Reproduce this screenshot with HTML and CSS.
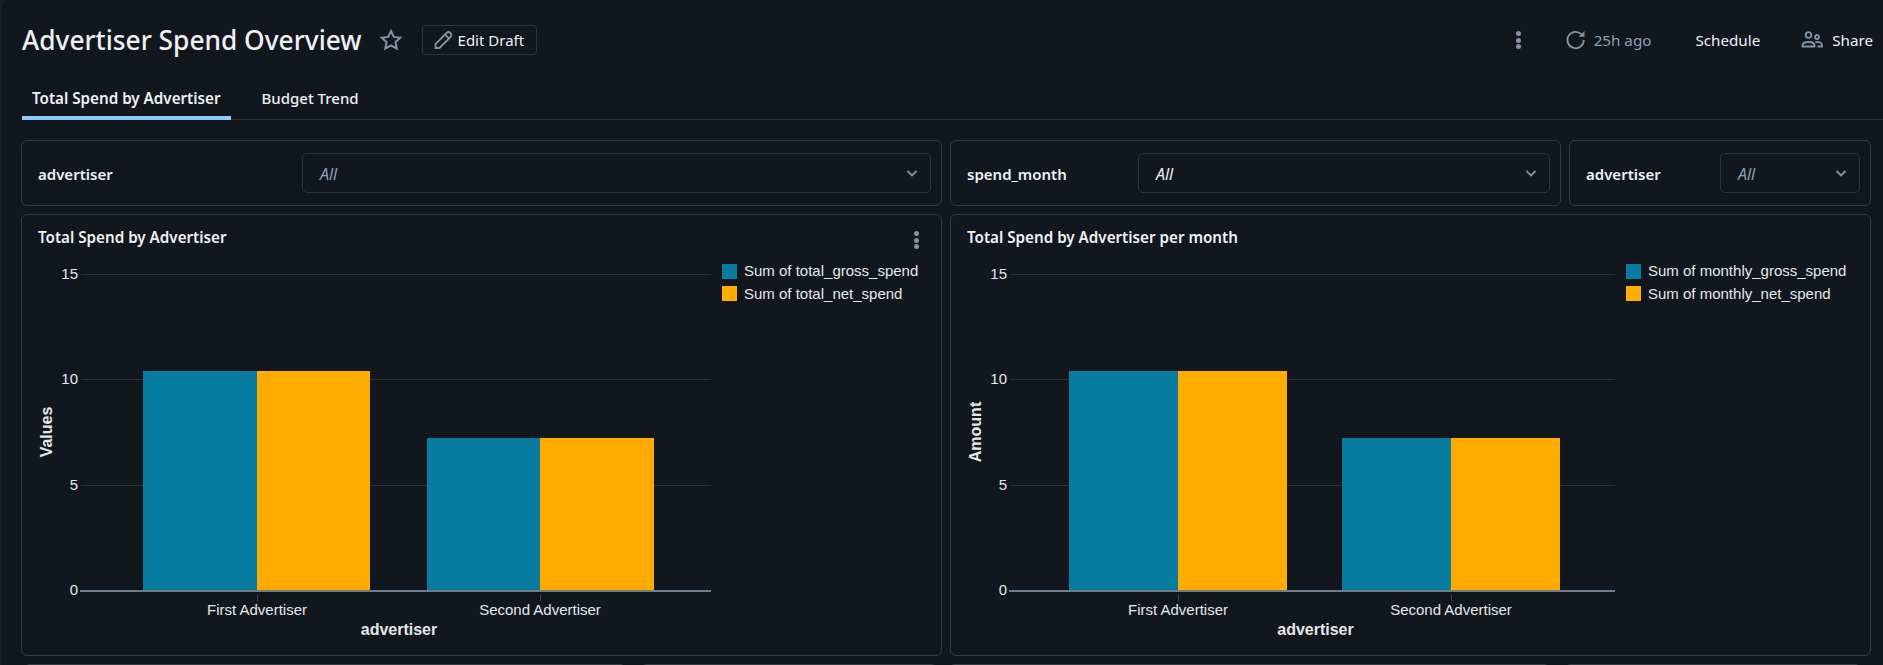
FILE: index.html
```html
<!DOCTYPE html>
<html lang="en">
<head>
  <meta charset="UTF-8" />
  <title>Advertiser Spend Overview</title>
  <link rel="stylesheet" href="styles.css">
</head>
<body>
  <header class="header">
    <h1>Advertiser Spend Overview</h1>
    <svg class="star" viewBox="0 0 24 24" width="24" height="24"><path d="M12 3l2.800 5.900 6.400.8-4.700 4.400 1.200 6.400-5.700-3.100-5.700 3.100 1.200-6.400-4.700-4.400 6.400-.8z" /></svg>
    <button class="edit-btn">
      <svg viewBox="0 0 20 20" width="20" height="20"><path d="M2.500 18v-4L13.500 3a2.800 2.800 0 0 1 4 4L6.500 18z M12 4.500l4 4" /></svg>
      Edit Draft
    </button>
    <div class="header-right">
      <span class="kebab"><i></i><i></i><i></i></span>
      <span class="refresh">
        <svg viewBox="0 0 22 22" width="22" height="22"><path d="M18.800 11a8.200 8.200 0 1 1-2.400-5.800" /><path class="solid" d="M19.500 2v5.800h-5.800z" /></svg>
        25h ago
      </span>
      <span class="schedule">Schedule</span>
      <span class="share">
        <svg viewBox="0 0 24 24" width="24" height="24"><circle cx="8.500" cy="7" r="2.800" /><circle cx="17" cy="9" r="2" /><path d="M2.500 18.500v-1c0-2.500 3-3.500 6-3.500s6 1 6 3.500v1z" /><path d="M15.500 14c3-.5 6.500.5 6.500 3v1.500h-4.500" /></svg>
        Share
      </span>
    </div>
  </header>

  <nav class="tabs">
    <a class="tab active">Total Spend by Advertiser</a>
    <a class="tab">Budget Trend</a>
  </nav>

  <section class="filters">
    <div class="card filter filter-a">
      <label>advertiser</label>
      <div class="select muted"><em>All</em><svg viewBox="0 0 12 12" width="12" height="12"><path d="M1.500 4l4.500 4.500L10.500 4" /></svg></div>
    </div>
    <div class="card filter filter-b">
      <label>spend_month</label>
      <div class="select"><em>All</em><svg viewBox="0 0 12 12" width="12" height="12"><path d="M1.500 4l4.500 4.500L10.500 4" /></svg></div>
    </div>
    <div class="card filter filter-c">
      <label>advertiser</label>
      <div class="select muted"><em>All</em><svg viewBox="0 0 12 12" width="12" height="12"><path d="M1.500 4l4.500 4.500L10.500 4" /></svg></div>
    </div>
  </section>

  <section class="charts">
    <article class="card chart-card">
      <h2>Total Spend by Advertiser</h2>
      <span class="kebab card-kebab"><i></i><i></i><i></i></span>
      <svg class="chart" id="chart-a" width="919" height="390"></svg>
    </article>
    <article class="card chart-card">
      <h2>Total Spend by Advertiser per month</h2>
      <svg class="chart" id="chart-b" width="919" height="390"></svg>
    </article>
  </section>

  <section class="next-row">
    <div class="stub stub-wide"></div>
    <div class="stub stub-narrow"></div>
    <div class="stub stub-wide"></div>
    <div class="stub stub-narrow"></div>
  </section>

  <script>
    const NS = "http://www.w3.org/2000/svg";

    function add(svg, tag, attrs, text) {
      const el = document.createElementNS(NS, tag);
      Object.keys(attrs).forEach(k => el.setAttribute(k, attrs[k]));
      if (text) el.textContent = text;
      svg.appendChild(el);
    }

    // y positions are relative to the svg, which starts at page y 265
    function drawChart(id, c) {
      const svg = document.getElementById(id);
      [[15, 9], [10, 114], [5, 220]].forEach(([v, y]) => {
        add(svg, "line", { x1: c.left, x2: c.right, y1: y + .5, y2: y + .5, class: "grid" });
        add(svg, "text", { x: c.left - 3, y: y + 5, class: "tick-label end" }, String(v));
      });
      add(svg, "text", { x: c.left - 3, y: 330, class: "tick-label end" }, "0");

      c.bars.forEach((x, i) => {
        const top = i === 0 ? 106 : 173;
        add(svg, "rect", { x: x[0], y: top, width: x[1] - x[0], height: 325 - top, class: "bar-a" });
        add(svg, "rect", { x: x[1], y: top, width: x[2] - x[1], height: 325 - top, class: "bar-b" });
      });

      add(svg, "line", { x1: c.left - 1, x2: c.right, y1: 326, y2: 326, class: "axis" });

      [[c.bars[0][1], "First Advertiser"], [c.bars[1][1], "Second Advertiser"]].forEach(([x, label]) => {
        add(svg, "line", { x1: x + .5, x2: x + .5, y1: 330, y2: 336, class: "tick" });
        add(svg, "text", { x: x, y: 350, class: "tick-label middle" }, label);
      });

      add(svg, "text", { x: (c.left + c.right) / 2 + 3, y: 370, class: "axis-title middle" }, "advertiser");
      add(svg, "text", { transform: `translate(${c.left - 29},167) rotate(-90)`, class: "axis-title middle" }, c.yTitle);

      c.legend.forEach((label, i) => {
        add(svg, "rect", { x: c.legendX, y: -1 + i * 22, width: 15, height: 15, class: i ? "bar-b" : "bar-a" });
        add(svg, "text", { x: c.legendX + 22, y: 11 + i * 23, class: "legend-label" }, label);
      });
    }

    drawChart("chart-a", {
      left: 59, right: 689, legendX: 700,
      bars: [[121, 235, 348], [405, 518, 632]],
      yTitle: "Values",
      legend: ["Sum of total_gross_spend", "Sum of total_net_spend"]
    });
    drawChart("chart-b", {
      left: 59, right: 664, legendX: 675,
      bars: [[118, 227, 336], [391, 500, 609]],
      yTitle: "Amount",
      legend: ["Sum of monthly_gross_spend", "Sum of monthly_net_spend"]
    });
  </script>
</body>
</html>
```

FILE: styles.css
```css
* {
  box-sizing: border-box;
}

html {
  height: 665px;
  overflow: hidden;
  background-color: #1a1f27;
}

body {
  height: 665px;
  overflow: hidden;
  margin: 0 0 0 2px;
  padding: 0 10px 0 20px;
  font-family: "Noto Sans", sans-serif;
  background-color: #12171e;
  border-top-left-radius: 8px;
  color: #eef1f4;
}

.header {
  display: flex;
  align-items: center;
  height: 80px;
}

h1 {
  margin: 0;
  font-size: 26.300px;
  font-weight: 500;
  line-height: 40px;
}

.star {
  margin-left: 17px;
  fill: none;
  stroke: #8492a3;
  stroke-width: 2;
}

.edit-btn {
  display: flex;
  align-items: center;
  gap: 5px;
  width: 115px;
  height: 30px;
  margin-left: 19px;
  padding: 0 10px;
  font: 15px "Noto Sans", sans-serif;
  color: #eef1f4;
  background: none;
  border: 1px solid #2e343c;
  border-radius: 4px;
}

.edit-btn svg {
  flex: none;
  fill: none;
  stroke: #8492a3;
  stroke-width: 1.800;
}

.header-right {
  display: flex;
  align-items: center;
  margin-left: auto;
  font-size: 15.200px;
}

.kebab {
  display: flex;
  flex-direction: column;
  gap: 1.500px;
}

.kebab i {
  width: 5px;
  height: 5px;
  border-radius: 50%;
  background: #8492a3;
}

.refresh {
  display: flex;
  align-items: center;
  gap: 7px;
  margin-left: 44px;
  color: #8aa0b5;
}

.refresh svg, .share svg {
  fill: none;
  stroke: #8492a3;
  stroke-width: 1.800;
}

.refresh .solid {
  fill: #8492a3;
  stroke: none;
}

.schedule {
  margin-left: 44px;
}

.share {
  display: flex;
  align-items: center;
  gap: 8px;
  margin-left: 40px;
}

.tabs {
  display: flex;
  height: 40px;
  margin-right: -10px;
  border-bottom: 1px solid #2e343c;
}

.tab {
  height: 40px;
  padding: 8px 10px 0;
  font-size: 15.200px;
  font-weight: 500;
  margin-right: 21px;
}

.tab:last-child {
  font-size: 15px;
}

.tab.active {
  font-weight: 600;
  border-bottom: 4px solid #90caf9;
}

.card {
  border: 1px solid #343b45;
  border-radius: 6px;
}

.filters {
  display: grid;
  grid-template-columns: 921px 611px 302px;
  column-gap: 8px;
  margin-top: 20px;
  margin-left: -1px;
}

.filter {
  display: flex;
  align-items: center;
  justify-content: space-between;
  height: 66px;
  padding: 0 10px 0 16px;
  font-size: 15px;
  font-weight: 600;
}

.filter label {
  padding-top: 2px;
}

.select {
  display: flex;
  align-items: center;
  justify-content: space-between;
  height: 40px;
  padding: 0 12px 0 17px;
  font-size: 16px;
  font-weight: 400;
  border: 1px solid #2e343c;
  border-radius: 5px;
}

.select em {
  padding-top: 1px;
}

.select.muted em {
  color: #8aa0b5;
}

.select svg {
  fill: none;
  stroke: #8492a3;
  stroke-width: 1.800;
}

.filter-a .select { width: 629px; }
.filter-b .select { width: 412px; }
.filter-c .select { width: 140px; }

.charts {
  display: grid;
  grid-template-columns: 921px 921px;
  column-gap: 8px;
  margin-top: 8px;
  margin-left: -1px;
}

.chart-card {
  position: relative;
  height: 442px;
  padding: 11px 16px 0;
}

h2 {
  margin: 0;
  font-size: 15.200px;
  font-weight: 600;
  line-height: 22px;
}

.card-kebab {
  position: absolute;
  top: 16px;
  right: 22px;
}

.chart {
  display: block;
  margin: 17px 0 0 -16px;
  overflow: visible;
}

.grid { stroke: #2e3238; }
.tick { stroke: #3c424a; }
.axis { stroke: #8da0b5; stroke-width: 1.500; }
.bar-a { fill: #087ba1; }
.bar-b { fill: #ffab00; }

.tick-label, .legend-label, .axis-title {
  font-family: "Liberation Sans", sans-serif;
  fill: #e4e7ea;
  font-size: 15px;
}

.axis-title {
  font-size: 16px;
  font-weight: 700;
}

.end { text-anchor: end; }
.middle { text-anchor: middle; }

.next-row {
  display: flex;
  height: 10px;
  margin-top: 8px;
  margin-left: 2px;
}

.stub {
  border-top: 1px solid #343b45;
  border-radius: 6px 6px 0 0;
}

.stub-wide { width: 604px; }
.stub-narrow { width: 297px; margin: 0 12px 0 15px; }
```
